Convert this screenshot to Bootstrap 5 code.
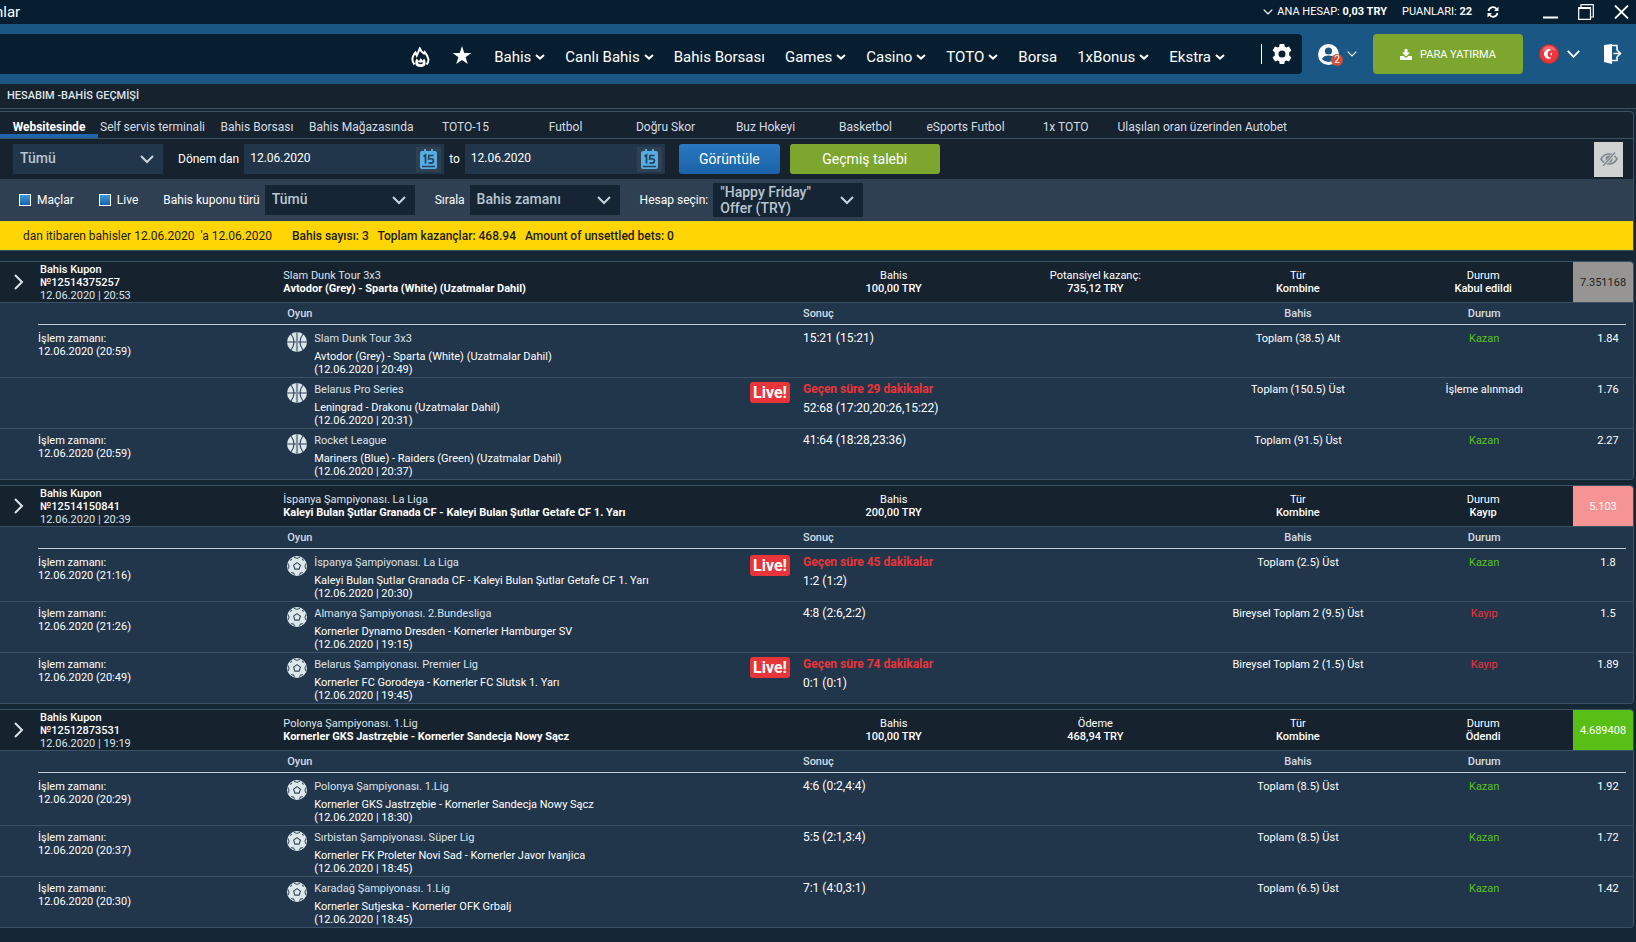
<!DOCTYPE html>
<html lang="tr">
<head>
<meta charset="utf-8">
<meta name="viewport" content="width=device-width, initial-scale=1">
<title>Hesabım - Bahis geçmişi</title>
<link rel="stylesheet" href="https://cdn.jsdelivr.net/npm/bootstrap@5.3.0/dist/css/bootstrap.min.css">
<style>
  :root { --line: #3a5166; --ink: #17222f; --navy: #071e30; --slate: #22364b; --steel: #2e4051; }
  body { font-family: Roboto, "Liberation Sans", sans-serif; font-size: 12px; line-height: 13px; color: #fff; background: #152735; overflow-x: hidden; }
  svg { display: block; flex: none; }
  a { color: inherit; text-decoration: none; }
  button.plain { background: none; border: 0; padding: 0; color: inherit; }
  .fw-mid { font-weight: 500; }

  .topbar { background: var(--navy); height: 24px; padding-right: 7px; }
  .clipped { margin-left: -5px; font-size: 15px; line-height: 24px; }
  .topbar .account { line-height: 22px; font-size: 11px; gap: 15px; margin-right: 44px; }
  .wins { gap: 20px; }

  .mainbar { background: #1a5784; height: 60px; padding-right: 14px; }
  .menu { background: var(--navy); height: 40px; border-radius: 0 4px 4px 0; padding-right: 10px; font-size: 15px; line-height: 40px; gap: 20px; }
  .menu a { display: flex; align-items: center; gap: 4px; padding-top: 5px; height: 40px; }
  .menu .gear { border-left: 1px solid #fff; padding-left: 10px; height: 20px; margin-left: 16px; }
  .count { position: absolute; left: 13px; top: 10px; width: 12px; height: 12px; border-radius: 50%; background: #d14e38; font-size: 10px; line-height: 12px; text-align: center; }
  .deposit { width: 150px; height: 40px; background: #7ca62d; border: 0; border-radius: 4px; color: #fff; font-size: 11px; }

  .pagetitle { background: var(--ink); height: 25px; border-bottom: 1px solid var(--line); padding-left: 7px; line-height: 24px; font-size: 11px; margin: 0; color: #dfe5ea; }
  .panel { margin: 2px 2px 0 0; border: 1px solid var(--line); border-left: 0; border-radius: 0 4px 0 0; background: var(--ink); }
  .tabs { height: 27px; border-bottom: 1px solid var(--line); color: #d5dde4; }
  .tabs a { min-width: 100px; padding: 2px 2px 0; text-align: center; line-height: 26px; height: 26px; }
  .tabs a.active { min-width: 98px; font-weight: 700; color: #fff; box-shadow: inset 0 -4px #1f65ad; }

  .filters { height: 40px; padding: 0 10px 0 13px; }
  .filters2 { height: 42px; background: var(--steel); padding-left: 19px; }
  .pick { width: 150px; height: 30px; border: 0; border-radius: 0; font-size: 14px; font-weight: 500; color: #b9c5d0; background-color: var(--slate); padding: 0 24px 2px 7px; line-height: 16px; appearance: none; text-align: left;
    background-image: url("data:image/svg+xml,%3Csvg xmlns='http://www.w3.org/2000/svg' viewBox='0 0 14 9'%3E%3Cpath d='M1 1l6 6 6-6' fill='none' stroke='%23c9d4dd' stroke-width='2'/%3E%3C/svg%3E"); background-repeat: no-repeat; background-position: right 9px center; background-size: 14px 9px; }
  .filters2 .pick { background-color: #152534; }
  .filters2 .two { height: 34px; padding-bottom: 0; }
  .filters2 label + .pick { margin-left: 5px; }
  .filters2 .pick + label { margin-left: 20px; }
  .tick + label { margin-right: 25px; }
  .datebox { width: 200px; height: 30px; background: var(--slate); padding-right: 3px; }
  .datebox input { flex: 1; min-width: 0; background: none; border: 0; color: #fff; font-size: 12px; padding: 0 0 2px 6px; height: 30px; }
  .datebox button { width: 25px; height: 25px; background: var(--steel); display: flex; align-items: center; justify-content: center; }
  .filters label.from { margin: 0 5px 0 15px; }
  .filters label.until { margin: 0 5px; }
  .go { width: 101px; height: 30px; border: 0; border-radius: 3px; color: #fff; font-size: 14px; margin-left: 14px; background: linear-gradient(#2a78c0, #1b62a8); }
  .ask { width: 150px; height: 30px; border: 0; border-radius: 3px; color: #fff; font-size: 14px; margin-left: 10px; background: #7ca62d; }
  .eye { width: 29px; height: 35px; border: 0; padding: 0; background: #cfd2d1; display: flex; align-items: center; justify-content: center; }
  .tick { appearance: none; width: 12px; height: 12px; border: 1px solid #fff; background: linear-gradient(#3b9ade, #1a63ab); margin: 0 6px 0 0; }
  .summary { height: 29px; background: #ffd503; color: #1c1c10; line-height: 30px; padding-left: 23px; white-space: pre; }

  .coupon { margin: 5px 2px 0 0; border: 1px solid var(--line); border-left: 0; border-radius: 0 4px 4px 0; background: var(--slate); overflow: hidden; font-size: 11px; }
  .panel + .coupon { margin-top: 10px; }
  .chead { display: grid; grid-template-columns: 40px 14.9% 1fr 11.6% 13.1% 11.7% 11% 60px; height: 41px; background: var(--ink); border-bottom: 1px solid var(--line); align-items: center; }
  .chead .mid { text-align: center; }
  .chead .open { padding-left: 14px; }
  .chead .soft { color: #dde4ea; }
  .odds { height: 40px; display: flex; align-items: center; justify-content: center; }
  .odds.pending { background: #979593; color: #222; }
  .odds.missed { background: #f69494; }
  .odds.paid { background: #57bf16; }
  .bets { width: 100%; table-layout: fixed; border-collapse: collapse; }
  .bets th, .bets td { vertical-align: top; padding: 5px 0 0; font-weight: 400; }
  .bets th { height: 21px; padding-top: 4px; color: #d3dce3; font-weight: 500; }
  .bets th.rule { border-bottom: 1px solid #c2cbd2; }
  .bets th.game-h { padding-left: 1px; }
  .bets tbody tr { height: 51px; border-bottom: 1px solid var(--line); }
  .bets tbody tr:first-child { height: 53px; }
  .bets tbody tr:first-child td { padding-top: 7px; }
  .bets tbody tr:last-child { border-bottom: 0; }
  .bets .mid { text-align: center; }
  .bets .coef { text-align: center; padding-left: 16px; }
  .bets .score { font-size: 12px; display: block; }
  .elapsed { color: #ec3438; font-size: 12px; font-weight: 700; margin-bottom: 6px; display: block; }
  .game { display: flex; gap: 7px; padding-left: 1px; }
  .game b { font-weight: 400; color: #dbe3ea; display: block; margin-bottom: 5px; white-space: nowrap; }
  .live { display: block; margin-top: -1px; width: 40px; height: 21px; border-radius: 3px; background: #e93439; font-size: 16px; font-weight: 700; line-height: 21px; text-align: center; }
  .won { color: #5bc21a; } .lost { color: #ec3438; }
  .gut { width: 38px; } .c-time { width: 15.2%; } .c-game { width: 28.4%; } .c-live { width: 53px; } .c-bet { width: 11.8%; } .c-stat { width: 11%; } .c-coef { width: 52px; } .c-end { width: 7px; }
</style>
</head>
<body>
<svg width="0" height="0" class="position-absolute" aria-hidden="true">
  <symbol id="chev" viewBox="0 0 10 6"><path d="M1 1l4 3.600L9 1" fill="none" stroke="#fff" stroke-width="2"/></symbol>
  <symbol id="thin" viewBox="0 0 10 6"><path d="M.7.7L5 5 9.300.7" fill="none" stroke="#fff" stroke-width="1.200"/></symbol>
  <symbol id="next" viewBox="0 0 10 16"><path d="M1 1l7 7-7 7" fill="none" stroke="#dce4ea" stroke-width="2"/></symbol>
  <symbol id="cal" viewBox="0 0 17 20"><path d="M2 2h2V0h2v2h5V0h2v2h2q2 0 2 2v14q0 2-2 2H2q-2 0-2-2V4q0-2 2-2z" fill="#56ade3"/><path d="M2 17.500h13M3.500 7.500L5.500 6v8.500M13.500 6.500H9l-.4 3.500q4.900-1 4.900 1.800 0 3-5 2.200" fill="none" stroke="#24405a" stroke-width="1.700"/></symbol>
  <symbol id="basket" viewBox="0 0 20 20"><circle cx="10" cy="10" r="10" fill="#dce8ea"/><path d="M10 0v20M0 10h20M4 2q6 8 0 16M16 2q-6 8 0 16" fill="none" stroke="#2c4157" stroke-width="1.100"/><path d="M10 0v20" stroke="#7f909f" stroke-width="2.200"/></symbol>
  <symbol id="foot" viewBox="0 0 20 20"><circle cx="10" cy="10" r="10" fill="#dce8ea"/><path d="M10 6.600l3.400 2.500-1.300 4H7.900l-1.300-4z" fill="none" stroke="#31465b" stroke-width="1.100"/><path d="M7 1.200L10 2.500l3-1.300M1 7.500l1 2.500-.8 3M19 7.500L18 10l.8 3M3.200 4.500L5 3M16.800 4.500L15 3M4 16.500l2.600.6.900 1.800M16 16.500l-2.600.6-.9 1.800" fill="none" stroke="#4a5f72" stroke-width="1.100"/></symbol>
</svg>

<header>
  <div class="topbar d-flex align-items-center justify-content-between">
    <div class="clipped">nlar</div>
    <div class="d-flex align-items-center">
      <div class="account d-flex align-items-center">
        <span class="d-flex align-items-center"><svg width="10" height="6" class="me-1"><use href="#thin"/></svg><span>ANA HESAP: <strong>0,03 TRY</strong></span></span>
        <span>PUANLARI: <strong>22</strong></span>
        <button class="plain" aria-label="Yenile"><svg width="12" height="12" viewBox="0 0 12 12"><path d="M1.500 5A4.500 4.500 0 0 1 9.500 3M10.500 7A4.500 4.500 0 0 1 2.500 9" fill="none" stroke="#fff" stroke-width="1.800"/><path d="M11.500.5v4.500H7zM.5 11.500V7H5z" fill="#fff"/></svg></button>
      </div>
      <div class="wins d-flex align-items-center">
        <button class="plain" aria-label="Küçült"><svg width="15" height="16"><path d="M0 13.500h15" stroke="#fff" stroke-width="2"/></svg></button>
        <button class="plain" aria-label="Pencere"><svg width="16" height="16" viewBox="0 0 16 16"><path d="M.7 3.500h11.800v11.800H.7zM3 3V.7h12.300V13H13M.7 4.300h12" fill="none" stroke="#fff" stroke-width="1.200"/></svg></button>
        <button class="plain" aria-label="Kapat"><svg width="15" height="14" viewBox="0 0 15 14"><path d="M1 .5l13 13M14 .5L1 13.500" stroke="#fff" stroke-width="1.800"/></svg></button>
      </div>
    </div>
  </div>
  <div class="mainbar d-flex align-items-center">
    <nav class="menu flex-grow-1 d-flex align-items-center justify-content-end">
      <a href="#" aria-label="Popüler"><svg width="19" height="20" viewBox="0 0 19 20"><path d="M3.500 17.500Q.8 14.500 1.600 10.500 2.300 8 4.500 5.500l1.300 3Q7.500 4.500 8.800 1.500q1.500 3.500 4 5l.8-1.500q3.400 4 3.900 7.500 0 3-2 5" fill="none" stroke="#fff" stroke-width="2"/><path d="M5 18.500q-1.800-3.500.6-7L8 14l1.800-3 1.700 2.800 1.700-2.300q2.400 4 .8 7-2 1.500-4.500 1.500T5 18.500z" fill="#fff"/><path d="M7.300 15.500q2.200 2 4.400 0" fill="none" stroke="#071e30" stroke-width="1.200"/></svg></a>
      <a href="#" aria-label="Favoriler"><svg width="24" height="24" viewBox="0 0 24 22"><path d="M12 0l2.300 7h7l-5.700 4.300L17.800 18 12 14l-5.800 4 2.200-6.700L2.700 7h7z" fill="#fff"/></svg></a>
      <a href="#">Bahis<svg width="10" height="6"><use href="#chev"/></svg></a>
      <a href="#">Canlı Bahis<svg width="10" height="6"><use href="#chev"/></svg></a>
      <a href="#">Bahis Borsası</a>
      <a href="#">Games<svg width="10" height="6"><use href="#chev"/></svg></a>
      <a href="#">Casino<svg width="10" height="6"><use href="#chev"/></svg></a>
      <a href="#">TOTO<svg width="10" height="6"><use href="#chev"/></svg></a>
      <a href="#">Borsa</a>
      <a href="#">1xBonus<svg width="10" height="6"><use href="#chev"/></svg></a>
      <a href="#">Ekstra<svg width="10" height="6"><use href="#chev"/></svg></a>
      <button class="plain gear d-flex" aria-label="Ayarlar"><svg width="20" height="20" viewBox="0 0 20 20"><path fill="#fff" fill-rule="evenodd" d="M7.700 0h4.600l.5 2.700 1.500.9 2.700-1 2.400 4-2.200 1.800v3.200l2.200 1.800-2.400 4-2.700-1-1.500.9-.5 2.700H7.700l-.5-2.700-1.500-.9-2.700 1-2.400-4 2.200-1.800V8.400L.6 6.600l2.400-4 2.700 1 1.500-.9zM10 6.500a3.500 3.500 0 1 0 0 7 3.500 3.500 0 0 0 0-7z"/></svg></button>
    </nav>
    <button class="plain d-flex align-items-center gap-2 ms-3" aria-label="Profil">
      <span class="position-relative"><svg width="21" height="21" viewBox="0 0 21 21"><circle cx="10.500" cy="10.500" r="10.500" fill="#fff"/><circle cx="10.500" cy="7" r="3.600" fill="#1a5784"/><path d="M3.800 15q2-3.400 6.700-3.400t6.700 3.400q-2.700 3-6.700 3t-6.700-3z" fill="#1a5784"/></svg><span class="count">2</span></span>
      <svg width="10" height="6"><use href="#thin"/></svg>
    </button>
    <button class="deposit d-flex align-items-center justify-content-center gap-2 ms-3"><svg width="12" height="11" viewBox="0 0 12 11"><path d="M4.500 0h3v3.500H10L6 7.500 2 3.500h2.500zM0 7h3.500L6 9l2.500-2H12v4H0z" fill="#fff"/></svg><span>PARA YATIRMA</span></button>
    <button class="plain d-flex align-items-center gap-2 ms-3" aria-label="Dil"><svg width="20" height="20" viewBox="0 0 20 20"><circle cx="10" cy="10" r="10" fill="#b8343c"/><circle cx="10" cy="10" r="9" fill="#ed353c"/><path d="M12.500 6.200a4.700 4.700 0 1 0 0 7.600A3.800 3.800 0 1 1 12.500 6.200z" fill="#fff"/><path d="M13 8.300v3.400l-2-1.700z" fill="#fff"/><path d="M3 7q2-5 7-5t7 5q-7-3-14 0z" fill="#fff" opacity=".25"/></svg><svg width="13" height="8" viewBox="0 0 13 8"><path d="M.8.800l5.700 6 5.700-6" fill="none" stroke="#fff" stroke-width="1.800"/></svg></button>
    <button class="plain ms-4" aria-label="Çıkış"><svg width="18" height="20" viewBox="0 0 18 20"><path d="M0 1l8-1v20l-8-2z" fill="#fff"/><path d="M8 1.500h5v5M8 16.500h5v-4M9.500 9.500H16M13.500 6.500l3 3-3 3" fill="none" stroke="#fff" stroke-width="1.600"/></svg></button>
  </div>
</header>

<main>
  <h1 class="pagetitle fw-mid">HESABIM -BAHİS GEÇMİŞİ</h1>
  <section class="panel">
    <nav class="tabs d-flex">
      <a href="#" class="active">Websitesinde</a><a href="#">Self servis terminali</a><a href="#">Bahis Borsası</a><a href="#">Bahis Mağazasında</a><a href="#">TOTO-15</a><a href="#">Futbol</a><a href="#">Doğru Skor</a><a href="#">Buz Hokeyi</a><a href="#">Basketbol</a><a href="#">eSports Futbol</a><a href="#">1x TOTO</a><a href="#">Ulaşılan oran üzerinden Autobet</a>
    </nav>
    <form class="filters d-flex align-items-center">
      <select class="pick" aria-label="Durum"><option>Tümü</option></select>
      <label for="from" class="from">Dönem dan</label>
      <div class="datebox d-flex align-items-center"><input id="from" type="text" value="12.06.2020"><button type="button" class="plain" aria-label="Takvim"><svg width="17" height="20"><use href="#cal"/></svg></button></div>
      <label for="to" class="until">to</label>
      <div class="datebox d-flex align-items-center"><input id="to" type="text" value="12.06.2020"><button type="button" class="plain" aria-label="Takvim"><svg width="17" height="20"><use href="#cal"/></svg></button></div>
      <button type="button" class="go">Görüntüle</button>
      <button type="button" class="ask">Geçmiş talebi</button>
      <button type="button" class="eye ms-auto" aria-label="Gizle"><svg width="18" height="14" viewBox="0 0 18 14"><path d="M1 7q3-5 8-5t8 5q-3 5-8 5T1 7z" fill="none" stroke="#7e8891" stroke-width="1.700"/><circle cx="9" cy="7" r="3.500" fill="#7e8891"/><path d="M3.500 13.500l12-13" stroke="#cfd2d1" stroke-width="3"/><path d="M3 14L15 .5" stroke="#7e8891" stroke-width="1.400"/></svg></button>
    </form>
    <form class="filters2 d-flex align-items-center">
      <input class="tick" type="checkbox" id="pre"><label for="pre">Maçlar</label>
      <input class="tick" type="checkbox" id="liv"><label for="liv">Live</label>
      <label for="kind">Bahis kuponu türü</label>
      <select class="pick" id="kind"><option>Tümü</option></select>
      <label for="sort">Sırala</label>
      <select class="pick" id="sort"><option>Bahis zamanı</option></select>
      <label for="acc">Hesap seçin:</label>
      <button type="button" class="pick two" id="acc">"Happy Friday" Offer (TRY)</button>
    </form>
    <div class="summary">dan itibaren bahisler 12.06.2020  'a 12.06.2020<span class="fw-mid ms-3 ps-1">Bahis sayısı: 3   Toplam kazançlar: 468.94   Amount of unsettled bets: 0</span></div>
  </section>

  <section class="coupon">
    <div class="chead">
      <button class="plain open" aria-label="Aç"><svg width="10" height="16"><use href="#next"/></svg></button>
      <div><span class="fw-mid">Bahis Kupon<br>№12514375257</span><br><span class="soft">12.06.2020 | 20:53</span></div>
      <div><span class="soft">Slam Dunk Tour 3x3</span><br><span class="fw-bold">Avtodor (Grey) - Sparta (White) (Uzatmalar Dahil)</span></div>
      <div class="mid">Bahis<br><span class="fw-mid">100,00 TRY</span></div>
      <div class="mid">Potansiyel kazanç:<br><span class="fw-mid">735,12 TRY</span></div>
      <div class="mid">Tür<br><span class="fw-mid">Kombine</span></div>
      <div class="mid">Durum<br><span class="fw-mid">Kabul edildi</span></div>
      <div class="odds pending">7.351168</div>
    </div>
    <table class="bets">
      <colgroup><col class="gut"><col class="c-time"><col class="c-game"><col class="c-live"><col><col class="c-bet"><col class="c-stat"><col class="c-coef"><col class="c-end"></colgroup>
      <thead><tr><th></th><th class="rule"></th><th class="rule game-h">Oyun</th><th class="rule"></th><th class="rule">Sonuç</th><th class="rule mid">Bahis</th><th class="rule mid">Durum</th><th class="rule"></th><th></th></tr></thead>
      <tbody>
        <tr><td></td><td>İşlem zamanı:<br>12.06.2020 (20:59)</td><td><div class="game"><svg width="20" height="20"><use href="#basket"/></svg><div><b>Slam Dunk Tour 3x3</b>Avtodor (Grey) - Sparta (White) (Uzatmalar Dahil)<br>(12.06.2020 | 20:49)</div></div></td><td></td><td><span class="score">15:21 (15:21)</span></td><td class="mid">Toplam (38.5) Alt</td><td class="mid won">Kazan</td><td class="coef">1.84</td><td></td></tr>
        <tr><td></td><td></td><td><div class="game"><svg width="20" height="20"><use href="#basket"/></svg><div><b>Belarus Pro Series</b>Leningrad - Drakonu (Uzatmalar Dahil)<br>(12.06.2020 | 20:31)</div></div></td><td><span class="live">Live!</span></td><td><span class="elapsed">Geçen süre 29 dakikalar</span><span class="score">52:68 (17:20,20:26,15:22)</span></td><td class="mid">Toplam (150.5) Üst</td><td class="mid">İşleme alınmadı</td><td class="coef">1.76</td><td></td></tr>
        <tr><td></td><td>İşlem zamanı:<br>12.06.2020 (20:59)</td><td><div class="game"><svg width="20" height="20"><use href="#basket"/></svg><div><b>Rocket League</b>Mariners (Blue) - Raiders (Green) (Uzatmalar Dahil)<br>(12.06.2020 | 20:37)</div></div></td><td></td><td><span class="score">41:64 (18:28,23:36)</span></td><td class="mid">Toplam (91.5) Üst</td><td class="mid won">Kazan</td><td class="coef">2.27</td><td></td></tr>
      </tbody>
    </table>
  </section>

  <section class="coupon">
    <div class="chead">
      <button class="plain open" aria-label="Aç"><svg width="10" height="16"><use href="#next"/></svg></button>
      <div><span class="fw-mid">Bahis Kupon<br>№12514150841</span><br><span class="soft">12.06.2020 | 20:39</span></div>
      <div><span class="soft">İspanya Şampiyonası. La Liga</span><br><span class="fw-bold">Kaleyi Bulan Şutlar Granada CF - Kaleyi Bulan Şutlar Getafe CF 1. Yarı</span></div>
      <div class="mid">Bahis<br><span class="fw-mid">200,00 TRY</span></div>
      <div></div>
      <div class="mid">Tür<br><span class="fw-mid">Kombine</span></div>
      <div class="mid">Durum<br><span class="fw-mid">Kayıp</span></div>
      <div class="odds missed">5.103</div>
    </div>
    <table class="bets">
      <colgroup><col class="gut"><col class="c-time"><col class="c-game"><col class="c-live"><col><col class="c-bet"><col class="c-stat"><col class="c-coef"><col class="c-end"></colgroup>
      <thead><tr><th></th><th class="rule"></th><th class="rule game-h">Oyun</th><th class="rule"></th><th class="rule">Sonuç</th><th class="rule mid">Bahis</th><th class="rule mid">Durum</th><th class="rule"></th><th></th></tr></thead>
      <tbody>
        <tr><td></td><td>İşlem zamanı:<br>12.06.2020 (21:16)</td><td><div class="game"><svg width="20" height="20"><use href="#foot"/></svg><div><b>İspanya Şampiyonası. La Liga</b>Kaleyi Bulan Şutlar Granada CF - Kaleyi Bulan Şutlar Getafe CF 1. Yarı<br>(12.06.2020 | 20:30)</div></div></td><td><span class="live">Live!</span></td><td><span class="elapsed">Geçen süre 45 dakikalar</span><span class="score">1:2 (1:2)</span></td><td class="mid">Toplam (2.5) Üst</td><td class="mid won">Kazan</td><td class="coef">1.8</td><td></td></tr>
        <tr><td></td><td>İşlem zamanı:<br>12.06.2020 (21:26)</td><td><div class="game"><svg width="20" height="20"><use href="#foot"/></svg><div><b>Almanya Şampiyonası. 2.Bundesliga</b>Kornerler Dynamo Dresden - Kornerler Hamburger SV<br>(12.06.2020 | 19:15)</div></div></td><td></td><td><span class="score">4:8 (2:6,2:2)</span></td><td class="mid">Bireysel Toplam 2 (9.5) Üst</td><td class="mid lost">Kayıp</td><td class="coef">1.5</td><td></td></tr>
        <tr><td></td><td>İşlem zamanı:<br>12.06.2020 (20:49)</td><td><div class="game"><svg width="20" height="20"><use href="#foot"/></svg><div><b>Belarus Şampiyonası. Premier Lig</b>Kornerler FC Gorodeya - Kornerler FC Slutsk 1. Yarı<br>(12.06.2020 | 19:45)</div></div></td><td><span class="live">Live!</span></td><td><span class="elapsed">Geçen süre 74 dakikalar</span><span class="score">0:1 (0:1)</span></td><td class="mid">Bireysel Toplam 2 (1.5) Üst</td><td class="mid lost">Kayıp</td><td class="coef">1.89</td><td></td></tr>
      </tbody>
    </table>
  </section>

  <section class="coupon">
    <div class="chead">
      <button class="plain open" aria-label="Aç"><svg width="10" height="16"><use href="#next"/></svg></button>
      <div><span class="fw-mid">Bahis Kupon<br>№12512873531</span><br><span class="soft">12.06.2020 | 19:19</span></div>
      <div><span class="soft">Polonya Şampiyonası. 1.Lig</span><br><span class="fw-bold">Kornerler GKS Jastrzębie - Kornerler Sandecja Nowy Sącz</span></div>
      <div class="mid">Bahis<br><span class="fw-mid">100,00 TRY</span></div>
      <div class="mid">Ödeme<br><span class="fw-mid">468,94 TRY</span></div>
      <div class="mid">Tür<br><span class="fw-mid">Kombine</span></div>
      <div class="mid">Durum<br><span class="fw-mid">Ödendi</span></div>
      <div class="odds paid">4.689408</div>
    </div>
    <table class="bets">
      <colgroup><col class="gut"><col class="c-time"><col class="c-game"><col class="c-live"><col><col class="c-bet"><col class="c-stat"><col class="c-coef"><col class="c-end"></colgroup>
      <thead><tr><th></th><th class="rule"></th><th class="rule game-h">Oyun</th><th class="rule"></th><th class="rule">Sonuç</th><th class="rule mid">Bahis</th><th class="rule mid">Durum</th><th class="rule"></th><th></th></tr></thead>
      <tbody>
        <tr><td></td><td>İşlem zamanı:<br>12.06.2020 (20:29)</td><td><div class="game"><svg width="20" height="20"><use href="#foot"/></svg><div><b>Polonya Şampiyonası. 1.Lig</b>Kornerler GKS Jastrzębie - Kornerler Sandecja Nowy Sącz<br>(12.06.2020 | 18:30)</div></div></td><td></td><td><span class="score">4:6 (0:2,4:4)</span></td><td class="mid">Toplam (8.5) Üst</td><td class="mid won">Kazan</td><td class="coef">1.92</td><td></td></tr>
        <tr><td></td><td>İşlem zamanı:<br>12.06.2020 (20:37)</td><td><div class="game"><svg width="20" height="20"><use href="#foot"/></svg><div><b>Sırbistan Şampiyonası. Süper Lig</b>Kornerler FK Proleter Novi Sad - Kornerler Javor Ivanjica<br>(12.06.2020 | 18:45)</div></div></td><td></td><td><span class="score">5:5 (2:1,3:4)</span></td><td class="mid">Toplam (8.5) Üst</td><td class="mid won">Kazan</td><td class="coef">1.72</td><td></td></tr>
        <tr><td></td><td>İşlem zamanı:<br>12.06.2020 (20:30)</td><td><div class="game"><svg width="20" height="20"><use href="#foot"/></svg><div><b>Karadağ Şampiyonası. 1.Lig</b>Kornerler Sutjeska - Kornerler OFK Grbalj<br>(12.06.2020 | 18:45)</div></div></td><td></td><td><span class="score">7:1 (4:0,3:1)</span></td><td class="mid">Toplam (6.5) Üst</td><td class="mid won">Kazan</td><td class="coef">1.42</td><td></td></tr>
      </tbody>
    </table>
  </section>
</main>
<script src="https://cdn.jsdelivr.net/npm/bootstrap@5.3.0/dist/js/bootstrap.bundle.min.js"></script>
</body>
</html>
